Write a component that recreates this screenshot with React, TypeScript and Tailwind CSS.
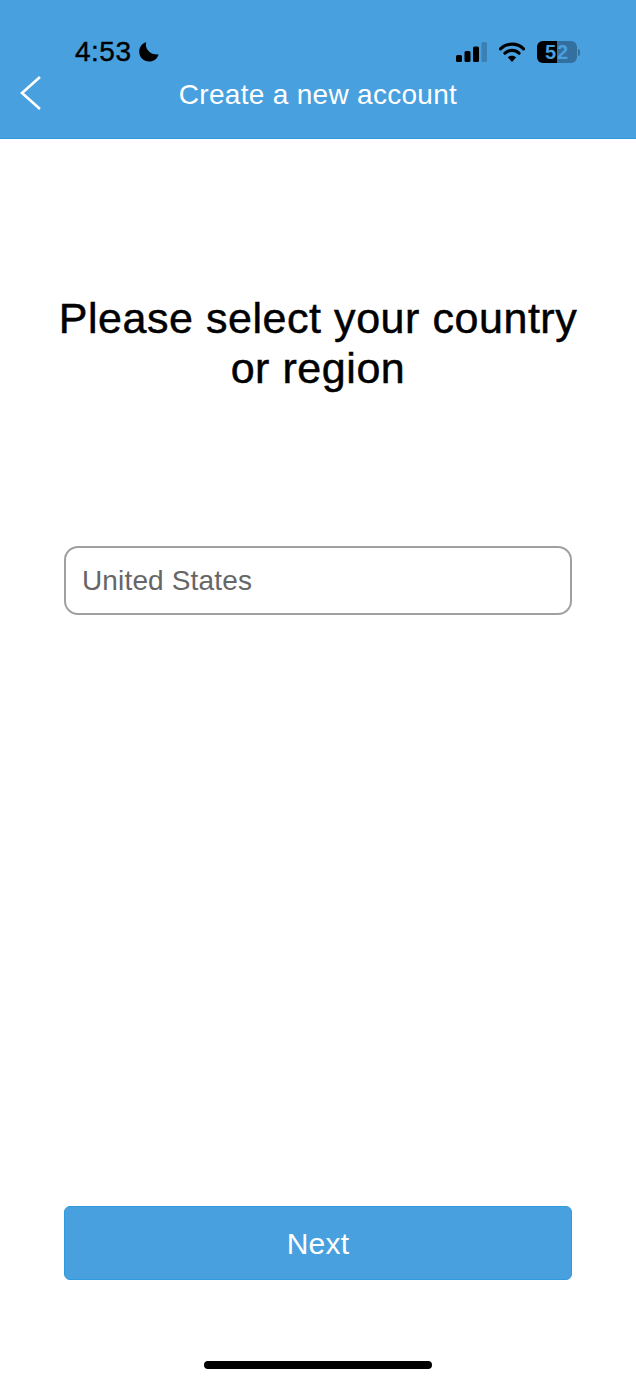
import React from 'react';

const SignalIcon = () => (
  <svg width="31" height="20" viewBox="0 0 31 20" fill="none">
    <rect x="0" y="13" width="6" height="7" rx="1.5" fill="#000" />
    <rect x="8.5" y="9" width="6" height="11" rx="1.5" fill="#000" />
    <rect x="17" y="4.5" width="6" height="15.5" rx="1.5" fill="#000" />
    <rect x="25.5" y="0" width="5.5" height="20" rx="1.5" fill="#3b7fb5" />
  </svg>
);

const WifiIcon = () => (
  <svg width="26" height="20" viewBox="0 0 26 20" fill="none">
    <path d="M1.5 6.8C7.8 0.6 18.2 0.6 24.5 6.8" stroke="#000" strokeWidth="3.2" strokeLinecap="round" />
    <path d="M6 11.2C10 7.4 16 7.4 20 11.2" stroke="#000" strokeWidth="3.2" strokeLinecap="round" />
    <path d="M13 20L8.8 15.2C11.2 13.1 14.8 13.1 17.2 15.2L13 20Z" fill="#000" />
  </svg>
);

const MoonIcon = () => (
  <svg width="22" height="22" viewBox="0 0 22 22" fill="none">
    <path d="M8.2 1C6.6 6.6 10.6 14 20.6 13.6C19.2 18 15.6 20.6 11.2 20.6C5.6 20.6 1.2 16.2 1.2 10.8C1.2 6.2 4 2.4 8.2 1Z" fill="#000" />
  </svg>
);

const Battery = () => (
  <div className="flex items-center gap-[1px]">
    <div className="relative flex h-[22px] w-[40px] items-center justify-center overflow-hidden rounded-[6px] bg-[#33709f]">
      <div className="absolute inset-y-0 left-0 w-[20px] bg-black" />
      <span className="relative text-[20px] font-bold leading-none tracking-[1px] text-[#4a9fdf]">52</span>
    </div>
    <div className="h-[7px] w-[2px] rounded-r-full bg-[#33709f]" />
  </div>
);

const App: React.FC = () => {
  return (
    <div className="flex h-[1382px] w-[636px] flex-col bg-white font-['Liberation_Sans',Arial,sans-serif]">
      <header className="h-[139px] border-b border-[#2f9ade] bg-[#49a0de] pt-[38px]">
        <div className="flex h-[28px] items-center justify-between pl-[75px] pr-[56px]">
          <div className="flex items-center gap-[6px]">
            <span className="text-[28px] leading-none tracking-[0.5px] text-black [-webkit-text-stroke:0.4px_#000]">4:53</span>
            <MoonIcon />
          </div>
          <div className="flex items-center gap-[12px]">
            <SignalIcon />
            <WifiIcon />
            <Battery />
          </div>
        </div>
        <div className="relative mt-[6px] flex h-[46px] items-center justify-center">
          <button className="absolute left-[20px] top-[4px]">
            <svg width="21" height="34" viewBox="0 0 21 34" fill="none">
              <path d="M20 1L2 17L20 33" stroke="#fff" strokeWidth="2.6" />
            </svg>
          </button>
          <h1 className="text-[28px] font-normal tracking-[0.3px] text-white">Create a new account</h1>
        </div>
      </header>

      <main className="flex flex-1 flex-col px-[64px]">
        <h2 className="-mx-[10px] mt-[154px] text-center text-[43px] leading-[50px] tracking-[0.55px] text-black [-webkit-text-stroke:0.5px_#000]">
          Please select your country or region
        </h2>

        <input
          readOnly
          placeholder="United States"
          className="mt-[153px] h-[69px] w-full rounded-[14px] border-2 border-[#a0a0a0] px-[16px] text-[28px] tracking-[0.15px] text-[#666] outline-none placeholder:text-[#666]"
        />

        <button className="mt-[591px] h-[74px] w-full rounded-[6px] border border-[#2f9ade] bg-[#49a0de] text-[30px] tracking-[0.2px] text-white">
          Next
        </button>
      </main>

      <div className="flex justify-center pb-[13px]">
        <div className="h-[8px] w-[228px] rounded-full bg-black" />
      </div>
    </div>
  );
};

export default App;
